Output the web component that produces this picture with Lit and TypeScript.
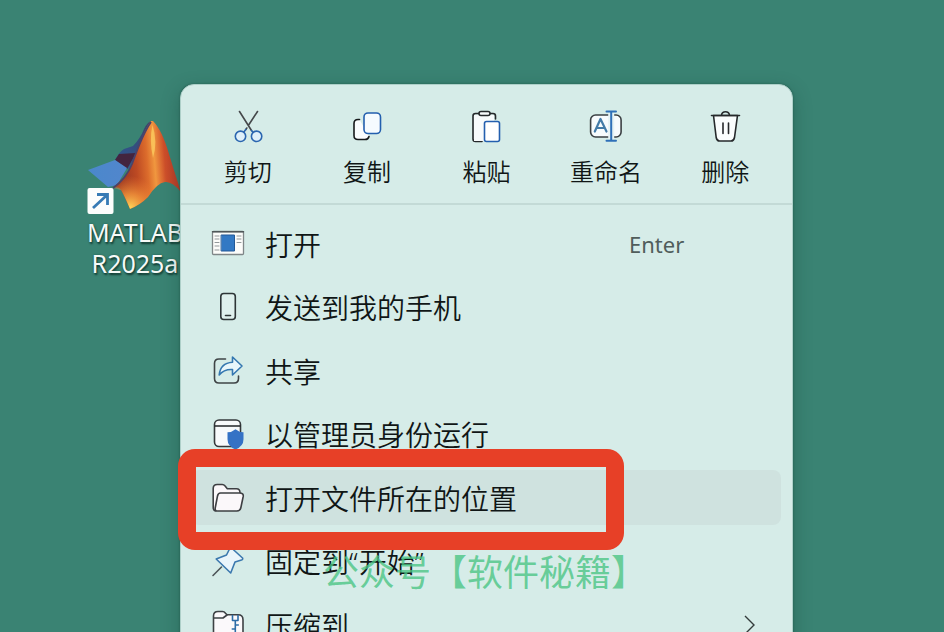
import { LitElement, html, svg, css } from "lit";
import { customElement } from "lit/decorators.js";

const icons: Record<string, unknown> = {
  cut: svg`<g stroke="#45484a"><path d="M11.500 4.500 23.500 23.500M29.500 4.500 21 17.500M18.800 21l-1 1.500"/></g><g stroke="#2b66b0"><path d="M17.800 22.500 15.500 25.500M23.500 23.500 25.500 26"/><circle cx="12.500" cy="29.300" r="5.200" fill="#dff0fa"/><circle cx="28.600" cy="29.300" r="5.200" fill="#dff0fa"/></g>`,
  copy: svg`<path d="M12.500 12.500H11q-4 0-4 4v12q0 4 4 4h7q3.300 0 4-3" stroke="#17191b" fill="#fbfdfe"/><rect x="17" y="6" width="16.500" height="20.500" rx="4" stroke="#235fae" fill="#f5fbff"/>`,
  paste: svg`<path d="M14 6.500h-4.500q-2.500 0-2.500 2.500v23q0 2.500 2.500 2.500h6.500M23 6.500h4q2.500 0 2.500 2.500v3" stroke="#26292b" fill="none"/><path d="M8 8h20v6h-8.500v20H8z" fill="#f8fbfc" stroke="none"/><rect x="13" y="4.500" width="11" height="4" rx="2" stroke="#26292b" fill="#f8fbfc"/><rect x="18.500" y="14.500" width="15" height="20" rx="2" stroke="#235fae" fill="#fff"/>`,
  rename: svg`<rect x="4.600" y="8" width="30.500" height="22" rx="5" stroke="#3b4043" fill="#f7fbfd"/><path d="M22.200 6v26h6V6z" fill="#e6f3f4" stroke="none"/><path d="M8.800 24.500 14.500 12l6 12.500M10.800 21h7.500" stroke="#437ba8" stroke-width="2.200" fill="none"/><path d="M25.200 4.500v29M20.500 4.500H30M20.500 33.800H30" stroke="#2f70b8" stroke-width="2"/>`,
  trash: svg`<path d="M8.500 8.500h24l-3 22q-.6 3.500-3.500 3.500H14.500q-2.700 0-3.300-3.500z" stroke="#26292b" fill="#fafdfd"/><path d="M6.500 8.500h28M16.500 8q.5-3.300 4-3.300t4 3.300M18 16v10.500M23.500 16v10.500" stroke="#26292b"/>`,
  window: svg`<rect x="4.500" y="7.500" width="31" height="23" rx="1" stroke="#7f8688" stroke-width="1.300" fill="#fcfcfa"/><path d="M4.500 7.700h31" stroke="#4f5658" stroke-width="1.500"/><rect x="13.500" y="11" width="13" height="16" fill="#3379c4" stroke="#235997" stroke-width="1"/><path d="M7 12h4M7 15h4M7 18.500h4M7 22h4M7 26h4M29 12h4M29 15h4M29 18.500h4" stroke="#93989a" stroke-width="1"/>`,
  phone: svg`<rect x="12.800" y="6.500" width="14.500" height="26" rx="3" stroke="#2e3537" fill="#dff0ed"/><path d="M17.500 28.500h5" stroke="#2e3537"/>`,
  share: svg`<path d="M17.500 8H11q-4.500 0-4.500 4.500v15Q6.500 32 11 32h15q4.500 0 4.500-4.500V25" stroke="#3f4446" fill="none"/><path d="M24.500 6 34 15l-9.500 9v-5.500q-8.500-.5-13.300 5.500 1-12 13.300-12.800z" stroke="#3477b0" fill="#e8f6fb"/>`,
  admin: svg`<rect x="6.500" y="6" width="26" height="26.500" rx="4.500" stroke="#35393b" fill="#f8fafb"/><path d="M7 12h25" stroke="#222628"/><path d="M27.500 15.300q3.500 3 8 3v7q0 7-8 10.200-8-3.200-8-10.200v-7q4.500 0 8-3z" fill="#3572c5" stroke="none"/>`,
  folder: svg`<path d="M8 33q-2.800-.3-2.800-4V10.500q0-4 4-4h5q1.700 0 2.700 1.300l2.400 2.900h9.200q3.500 0 3.500 4" stroke="#3d3f42" fill="#fbf8fa"/><path d="M12.500 15h19q4.300 0 3.700 3.500l-2.300 11q-.7 3.500-4 3.500H9.500Q6.600 33 7.300 29.500l2.200-11.500q.6-3 3-3z" stroke="#3d3f42" fill="#fbf8fa"/>`,
  pin: svg`<path d="M5 34.500 13.500 26" stroke="#4e5558"/><path d="m22.500 6 12 11q.8 1.500-1 2l-6.500 2-4.300 11L8.200 18 18.500 14z" stroke="#3b78ae" fill="#eaf5fb"/>`,
  zip: svg`<path d="M5.500 36V11q0-4.500 4.500-4.500h4.500q1.700 0 3 1.800l1.400 1.500H30q5 0 5 5V36z" stroke="#3d4144" fill="#fbf9fb"/><path d="M6 13h9l4-3" stroke="#3d4144" fill="none"/><path d="M24.500 10.500v5h5.500v-5M27.300 15.500v20M27.300 20h3M24.300 24h3M27.300 28h3M24.300 32h3" stroke="#2c6ca7" fill="none"/>`,
};

const icon = (name: string) =>
  html`<svg class="icon" viewBox="0 0 40 40" fill="none" stroke-width="1.600" stroke-linecap="round" stroke-linejoin="round">${icons[name]}</svg>`;

@customElement("app-root")
export class AppRoot extends LitElement {
  static styles = css`
    :host { display: block; position: relative; width: 944px; height: 632px; overflow: hidden; background: #3a8373; color: #101616; }
    .shortcut { position: absolute; left: 75px; top: 115px; width: 120px; text-align: center; color: #f6faf8; line-height: 31px; text-shadow: 1px 2px 2px #123b32, 0 0 2px #245c50; }
    .logo { display: block; width: 110px; height: 102px; }
    .name { display: block; white-space: pre; font-family: "Noto Sans", sans-serif; font-size: 25px; }
    .menu { position: absolute; left: 180px; top: 84px; width: 613px; height: 600px; box-sizing: border-box; border: 1px solid #aed0c9; border-radius: 14px; background: #d6ece8; box-shadow: 0 6px 18px #123e3460, 0 0 2px #123e3480; }
    .tools { display: grid; grid-template-columns: repeat(5, 1fr); padding: 0 7px; height: 118px; border-bottom: 2px solid #c3dad6; }
    .tool { display: flex; flex-direction: column; align-items: center; padding-top: 22px; font-family: "Noto Sans CJK SC", sans-serif; font-size: 24px; line-height: 30px; font-weight: 350; }
    .tool span { margin-top: 9px; }
    .icon { width: 40px; height: 40px; flex: none; display: block; }
    .rows { padding: 11px 11px 0 10px; }
    .row { display: flex; align-items: center; height: 55px; margin-bottom: 8.500px; padding: 0 27px 0 17px; border-radius: 8px; }
    .row.active { background: #cfe2df; }
    .label { flex: 1; margin-left: 17px; font-family: "Noto Sans CJK SC", sans-serif; font-size: 28px; line-height: 40px; font-weight: 350; white-space: nowrap; }
    .quote { font-family: "Noto Sans", sans-serif; font-size: 28px; line-height: 1; margin-right: 1px; }
    .key { width: 125px; color: #505d5b; font-family: "Noto Sans", sans-serif; font-size: 22px; }
    .chevron { width: 12px; height: 20px; margin-right: -2px; }
    .frame { position: absolute; left: 178px; top: 449px; width: 446px; height: 101px; box-sizing: border-box; border: 18px solid #e74027; border-radius: 17px; }
    .mark { position: absolute; left: 323px; top: 544px; color: #4ac584cc; font: 400 36px/52px "Noto Sans CJK SC", sans-serif; white-space: nowrap; }
  `;

  private tools = [["cut", "剪切"], ["copy", "复制"], ["paste", "粘贴"], ["rename", "重命名"], ["trash", "删除"]];

  private rows = [
    { icon: "window", label: "打开", key: "Enter" },
    { icon: "phone", label: "发送到我的手机" },
    { icon: "share", label: "共享" },
    { icon: "admin", label: "以管理员身份运行" },
    { icon: "folder", label: "打开文件所在的位置", active: true },
    { icon: "pin", label: html`固定到<span class="quote">“</span>开始<span class="quote">”</span>` },
    { icon: "zip", label: "压缩到", more: true },
  ];

  render() {
    return html`
      <div class="shortcut">
        <svg class="logo" viewBox="75 115 110 102">
          <defs>
            <linearGradient id="flame" x1="0" x2="1" y1=".1" y2="0">
              <stop offset="0" stop-color="#8c3022"/><stop offset=".3" stop-color="#bd4a23"/><stop offset=".46" stop-color="#dc6c2c"/><stop offset=".57" stop-color="#f0973f"/><stop offset=".72" stop-color="#cf4f2a"/><stop offset="1" stop-color="#b52f24"/>
            </linearGradient>
            <radialGradient id="glow" gradientUnits="userSpaceOnUse" cx="130" cy="208" r="32">
              <stop offset="0" stop-color="#ffd65a"/><stop offset=".45" stop-color="#f79a3c" stop-opacity=".75"/><stop offset="1" stop-color="#f07c30" stop-opacity="0"/>
            </radialGradient>
            <linearGradient id="wing" x1="0" x2="1"><stop offset="0" stop-color="#4a88cc"/><stop offset="1" stop-color="#5286cc"/></linearGradient>
            <linearGradient id="ridge" x1="0" x2="1" y1="1" y2="0"><stop offset="0" stop-color="#2d5898"/><stop offset="1" stop-color="#3a4567"/></linearGradient>
          </defs>
          <path d="M115 160Q120 151 124 149L133 146Q140 139 144 129 148 121 152 121L144 142 128 169z" fill="url(#ridge)"/>
          <path d="M115 160 119 154 136 153 127 169z" fill="#43243f"/>
          <path d="M88 170 115 160 127 168 117 185 108 187z" fill="url(#wing)"/>
          <path d="M117 184Q127 176 132 164 145 127 151 121L153 121Q162 130 169 154 176 177 181 192 172 181 165 182 157 183 148 197 140 205 130 209 125 197 121 190 119 186 113 188z" fill="url(#flame)"/>
          <path d="M113 188 117 184Q127 176 132 164 145 127 151 121L153 121Q162 130 169 154 176 177 181 192 172 181 165 182 157 183 148 197 140 205 130 209 125 197 121 190z" fill="url(#glow)"/>
          <path d="M113 188Q126 179 132 164 143 133 151 122" fill="none" stroke="#4b426a" stroke-width="1.800"/>
          <path d="M152.500 125Q158 142 153 158 149 140 152.500 125z" fill="#ffd765" opacity=".65"/>
          <rect x="87.500" y="188" width="26" height="26" rx="2" fill="#fcfdfc"/>
          <path d="M93 208 106.500 195.500M97 194.500h10.500V205" fill="none" stroke="#377bb5" stroke-width="2.800"/>
        </svg>
        <span class="name">MATLAB</span><span class="name">R2025a</span>
      </div>
      <div class="menu">
        <div class="tools">${this.tools.map(([name, label]) => html`<div class="tool">${icon(name)}<span>${label}</span></div>`)}</div>
        <div class="rows">
          ${this.rows.map((r) => html`<div class="row ${r.active ? "active" : ""}">${icon(r.icon)}<span class="label">${r.label}</span>${r.key ? html`<span class="key">${r.key}</span>` : ""}${r.more ? html`<svg class="chevron" viewBox="0 0 12 20"><path d="m1 1 9 9-9 9" fill="none" stroke="#333b3b" stroke-width="1.400"/></svg>` : ""}</div>`)}
        </div>
      </div>
      <div class="frame"></div>
      <div class="mark">公众号【软件秘籍】</div>
    `;
  }
}
